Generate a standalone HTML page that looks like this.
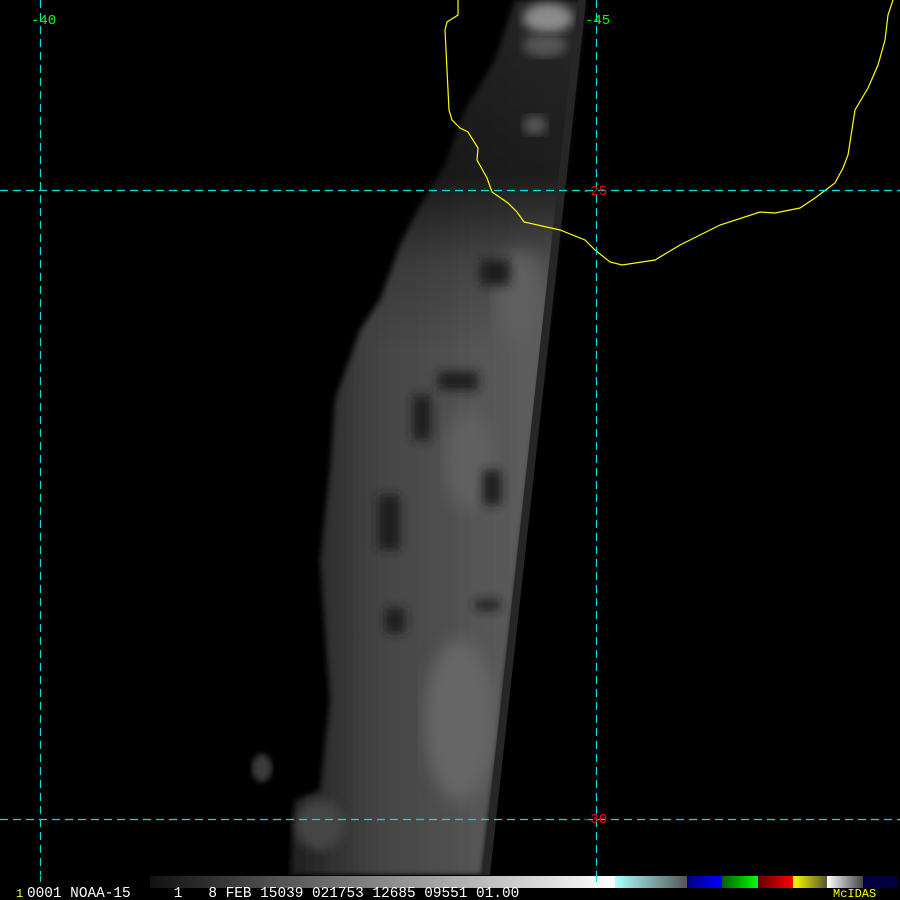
<!DOCTYPE html>
<html><head><style>
html,body{margin:0;padding:0;background:#000;width:900px;height:900px;overflow:hidden}
svg{display:block}
</style></head><body>
<svg width="900" height="900" viewBox="0 0 900 900" xmlns="http://www.w3.org/2000/svg">
<defs>
<linearGradient id="g" x1="0" y1="0" x2="1" y2="0">
<stop offset="0" stop-color="#1e1e1e"/>
<stop offset="0.3" stop-color="#444"/>
<stop offset="0.7" stop-color="#585858"/>
<stop offset="1" stop-color="#626262"/>
</linearGradient>
<linearGradient id="v" x1="0" y1="0" x2="0" y2="1">
<stop offset="0" stop-color="#000" stop-opacity="0.6"/>
<stop offset="0.2" stop-color="#000" stop-opacity="0.7"/>
<stop offset="0.3" stop-color="#000" stop-opacity="0.2"/>
<stop offset="0.4" stop-color="#000" stop-opacity="0"/>
<stop offset="1" stop-color="#000" stop-opacity="0"/>
</linearGradient>
<filter id="b"><feGaussianBlur stdDeviation="3"/></filter>
<filter id="b1"><feGaussianBlur stdDeviation="5"/></filter>
<filter id="b2"><feGaussianBlur stdDeviation="8"/></filter>
</defs>
<rect width="900" height="900" fill="#000"/>
<polygon filter="url(#b)" fill="url(#g)" points="515,0 585,0 482,875 290,875 295,800 320,790 330,700 320,560 330,470 335,400 360,330 380,300 400,245 420,205 445,165 465,110 495,60"/>
<polygon fill="url(#v)" points="430,0 600,0 480,875 280,875"/>
<ellipse cx="548" cy="18" rx="25" ry="15" fill="#8a8a8a" filter="url(#b1)"/>
<ellipse cx="545" cy="45" rx="22" ry="12" fill="#555" filter="url(#b1)"/>
<ellipse cx="535" cy="125" rx="12" ry="10" fill="#555" filter="url(#b1)"/>
<ellipse cx="520" cy="300" rx="25" ry="50" fill="#5e5e5e" filter="url(#b2)"/>
<ellipse cx="460" cy="720" rx="35" ry="80" fill="#666" filter="url(#b2)"/>
<ellipse cx="470" cy="460" rx="25" ry="50" fill="#606060" filter="url(#b2)"/>
<g fill="#1a1a1a" filter="url(#b1)">
<rect x="438" y="372" width="40" height="18"/>
<rect x="413" y="395" width="18" height="45"/>
<rect x="378" y="495" width="22" height="55"/>
<rect x="483" y="470" width="18" height="35"/>
<rect x="385" y="608" width="20" height="25"/>
<rect x="475" y="600" width="25" height="10"/>
<rect x="480" y="260" width="30" height="25"/>
</g>
<polygon fill="#262626" points="578,0 586,0 490,875 482,875"/>
<ellipse cx="262" cy="768" rx="10" ry="14" fill="#3a3a3a" filter="url(#b)"/>
<ellipse cx="320" cy="825" rx="25" ry="25" fill="#444" filter="url(#b1)"/>
<polyline fill="none" stroke="#ffff00" stroke-width="1.2" points="458,0 458,15 447,22 445,30 449,110 452,120 460,128 468,132 478,148 477,160 487,178 492,192 508,203 517,212 524,222 560,230 585,240 595,250 610,262 622,265 655,260 680,245 720,225 760,212 775,213 800,208 815,198 835,183 843,168 848,155 855,110 868,88 878,65 885,40 888,15 893,0"/>
<g stroke="#00e0e0" stroke-width="1.2" stroke-dasharray="8,5">
<line x1="40.5" y1="0" x2="40.5" y2="875"/>
<line x1="596.5" y1="0" x2="596.5" y2="875"/>
<line x1="0" y1="190.5" x2="900" y2="190.5"/>
<line x1="0" y1="819.5" x2="900" y2="819.5"/>
</g>
<rect x="546" y="184" width="70" height="13" fill="#000" opacity="0"/>
<g font-family="Liberation Mono, monospace" font-size="14">
<text x="31" y="24" fill="#00ff00">-40</text>
<text x="585" y="24" fill="#00ff00">-45</text>
<text x="582" y="195" fill="#ff0000">-25</text>
<text x="582" y="823" fill="#ff0000">-30</text>
</g>
<rect x="0" y="875" width="900" height="25" fill="#000"/>
<linearGradient id="gb" x1="0" y1="0" x2="1" y2="0"><stop offset="0" stop-color="#111"/><stop offset="1" stop-color="#fff"/></linearGradient>
<linearGradient id="gc" x1="0" y1="0" x2="1" y2="0"><stop offset="0" stop-color="#aaffff"/><stop offset="1" stop-color="#555"/></linearGradient>
<linearGradient id="gbl" x1="0" y1="0" x2="1" y2="0"><stop offset="0" stop-color="#000080"/><stop offset="1" stop-color="#0000ff"/></linearGradient>
<linearGradient id="ggr" x1="0" y1="0" x2="1" y2="0"><stop offset="0" stop-color="#006000"/><stop offset="1" stop-color="#00ff00"/></linearGradient>
<linearGradient id="grd" x1="0" y1="0" x2="1" y2="0"><stop offset="0" stop-color="#600000"/><stop offset="1" stop-color="#ff0000"/></linearGradient>
<linearGradient id="gy" x1="0" y1="0" x2="1" y2="0"><stop offset="0" stop-color="#ffff00"/><stop offset="1" stop-color="#555530"/></linearGradient>
<linearGradient id="gw" x1="0" y1="0" x2="1" y2="0"><stop offset="0" stop-color="#fff"/><stop offset="1" stop-color="#444"/></linearGradient>
<rect x="150" y="876" width="465" height="12" fill="url(#gb)"/>
<rect x="615" y="876" width="72" height="12" fill="url(#gc)"/>
<rect x="687" y="876" width="35" height="12" fill="url(#gbl)"/>
<rect x="722" y="876" width="36" height="12" fill="url(#ggr)"/>
<rect x="758" y="876" width="35" height="12" fill="url(#grd)"/>
<rect x="793" y="876" width="34" height="12" fill="url(#gy)"/>
<rect x="827" y="876" width="36" height="12" fill="url(#gw)"/>
<rect x="863" y="876" width="34" height="12" fill="#000040"/>
<line x1="40.5" y1="876" x2="40.5" y2="882" stroke="#00e0e0"/>
<line x1="596.5" y1="872" x2="596.5" y2="882" stroke="#00e0e0"/>
<g font-family="Liberation Mono, monospace" font-size="14.4" fill="#fff">
<text x="16" y="897" fill="#ffff00" font-size="12">1</text>
<text x="27" y="897" xml:space="preserve">0001 NOAA-15     1   8 FEB 15039 021753 12685 09551 01.00</text>
<text x="833" y="897" fill="#ffff00" font-size="12">McIDAS</text>
</g>
</svg>
</body></html>
